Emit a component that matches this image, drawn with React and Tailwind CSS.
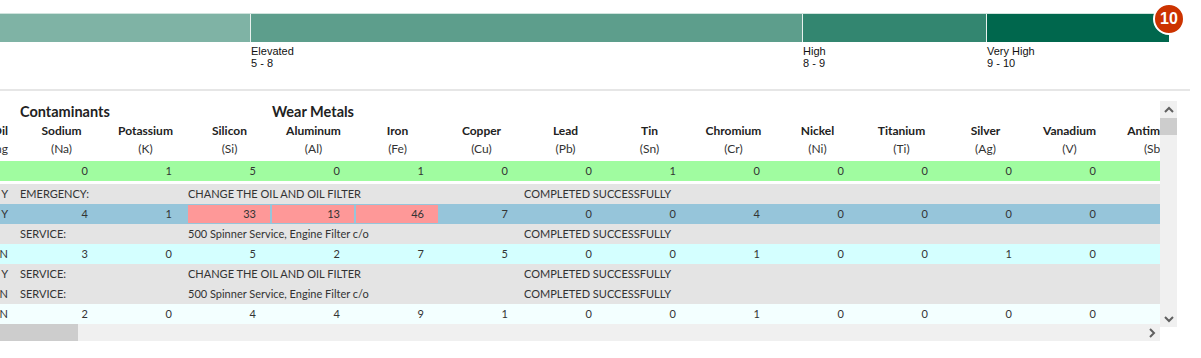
import React from "react";

const columns = [
  ["Sodium", "(Na)"],
  ["Potassium", "(K)"],
  ["Silicon", "(Si)"],
  ["Aluminum", "(Al)"],
  ["Iron", "(Fe)"],
  ["Copper", "(Cu)"],
  ["Lead", "(Pb)"],
  ["Tin", "(Sn)"],
  ["Chromium", "(Cr)"],
  ["Nickel", "(Ni)"],
  ["Titanium", "(Ti)"],
  ["Silver", "(Ag)"],
  ["Vanadium", "(V)"],
  ["Antimony", "(Sb)"],
];

const rows = [
  { kind: "note", bg: "bg-[#e4e4e4]", flag: "Y", label: "EMERGENCY:", action: "CHANGE THE OIL AND OIL FILTER", status: "COMPLETED SUCCESSFULLY" },
  { kind: "data", bg: "bg-[#96c5da]", flag: "Y", values: [4, 1, 33, 13, 46, 7, 0, 0, 4, 0, 0, 0, 0, 0], alert: [2, 3, 4] },
  { kind: "note", bg: "bg-[#e4e4e4]", flag: "", label: "SERVICE:", action: "500 Spinner Service, Engine Filter c/o", status: "COMPLETED SUCCESSFULLY" },
  { kind: "data", bg: "bg-[#d4ffff]", flag: "N", values: [3, 0, 5, 2, 7, 5, 0, 0, 1, 0, 0, 1, 0, 0] },
  { kind: "note", bg: "bg-[#e4e4e4]", flag: "Y", label: "SERVICE:", action: "CHANGE THE OIL AND OIL FILTER", status: "COMPLETED SUCCESSFULLY" },
  { kind: "note", bg: "bg-[#e4e4e4]", flag: "N", label: "SERVICE:", action: "500 Spinner Service, Engine Filter c/o", status: "COMPLETED SUCCESSFULLY" },
  { kind: "data", bg: "bg-[#f3ffff]", flag: "N", values: [2, 0, 4, 4, 9, 1, 0, 0, 1, 0, 0, 0, 0, 0] },
];

const segments = [
  { w: "w-[250px]", bg: "bg-[#7fb3a5]", label: null },
  { w: "w-[552px]", bg: "bg-[#5d9e8c]", label: ["Elevated", "5 - 8"] },
  { w: "w-[184px]", bg: "bg-[#338670]", label: ["High", "8 - 9"] },
  { w: "w-[183px]", bg: "bg-[#00674d]", label: ["Very High", "9 - 10"] },
];

const Chevron = ({ dir }) => {
  const pts = {
    up: "1,6 5,2 9,6",
    down: "1,2 5,6 9,2",
    right: "2,1 6,5 2,9",
  }[dir];
  const size = dir === "right" ? "w-[8px] h-[10px]" : "w-[10px] h-[8px]";
  return (
    <svg className={size} viewBox={dir === "right" ? "0 0 8 10" : "0 0 10 8"}>
      <polyline points={pts} fill="none" stroke="#606060" strokeWidth="2" />
    </svg>
  );
};

// leftmost column is scrolled mostly out of view: only the tail of each text shows
const FlagCell = ({ text }) => (
  <div className="w-[19px] shrink-0 flex justify-end overflow-hidden pr-[11px] whitespace-nowrap">
    {text}
  </div>
);

const DataRow = ({ row }) => (
  <div className={`flex h-[20px] items-center ${row.bg}`}>
    <FlagCell text={row.flag} />
    {row.values.map((v, i) => (
      <div key={i} className="w-[84px] shrink-0 h-full px-[1px] py-[1px]">
        <div
          className={`h-full flex items-center justify-end pr-[14px] ${
            row.alert && row.alert.includes(i) ? "bg-[#fe9898]" : ""
          }`}
        >
          {v}
        </div>
      </div>
    ))}
  </div>
);

const NoteRow = ({ row }) => (
  <div className={`flex h-[20px] items-center whitespace-nowrap ${row.bg}`}>
    <FlagCell text={row.flag} />
    <div className="w-[168px] shrink-0 pl-[1px]">{row.label}</div>
    <div className="w-[336px] shrink-0 pl-[1px]">{row.action}</div>
    <div className="pl-[1px]">{row.status}</div>
  </div>
);

export default function App() {
  return (
    <div className="w-[1201px] h-[358px] bg-white overflow-hidden relative">
      {/* risk gauge */}
      <div className="pt-[13px]">
        <div className="relative w-[1169px]">
          <div className="flex h-[29px] border-t border-[#cfe3dd]">
            {segments.map((s, i) => (
              <div key={i} className={`${s.w} ${s.bg} ${i > 0 ? "border-l border-[#e8f1ee]" : ""}`} />
            ))}
          </div>
          <div className="absolute -right-[16px] -top-[10px] w-[32px] h-[32px] rounded-full bg-[#cc3300] border-2 border-white flex items-center justify-center text-white font-bold text-[16px] font-['Liberation_Sans',Arial,sans-serif]">
            10
          </div>
        </div>
        <div className="flex mt-[3px] font-['Liberation_Sans',Arial,sans-serif] text-[11px] leading-[12px] text-[#111]">
          {segments.map((s, i) => (
            <div key={i} className={`${s.w} ${i > 0 ? "pl-[1px]" : ""}`}>
              {s.label && (
                <>
                  <div>{s.label[0]}</div>
                  <div>{s.label[1]}</div>
                </>
              )}
            </div>
          ))}
        </div>
      </div>

      <div className="mt-[20px] w-[1190px] h-[2px] bg-[#e6e6e6]" />

      {/* results table */}
      <div className="mt-[10px] flex font-['Lato','Open_Sans',sans-serif] text-[#333]">
        <div className="w-[1160px] shrink-0">
          <div className="h-[223px] overflow-hidden text-[11px]">
            <div className="flex h-[20px] items-center font-bold text-[14.5px] text-[#222] pt-[1px] whitespace-nowrap">
              <div className="w-[20px] shrink-0" />
              <div className="w-[252px] shrink-0">Contaminants</div>
              <div>Wear Metals</div>
            </div>
            <div className="flex h-[19px] items-center font-bold text-[12px] text-[#222] whitespace-nowrap">
              <FlagCell text="Oil" />
              {columns.map(([name]) => (
                <div key={name} className="w-[84px] shrink-0 text-center pl-[1px]">
                  {name}
                </div>
              ))}
            </div>
            <div className="flex h-[18px] items-center text-[12px] whitespace-nowrap">
              <FlagCell text="Rating" />
              {columns.map(([name, sym]) => (
                <div key={name} className="w-[84px] shrink-0 text-center pl-[1px]">
                  {sym}
                </div>
              ))}
            </div>
            <div className="mt-[3px]">
              <DataRow row={{ bg: "bg-[#a0fca0]", flag: "", values: [0, 1, 5, 0, 1, 0, 0, 1, 0, 0, 0, 0, 0, 0] }} />
            </div>
            <div className="mt-[3px]">
              {rows.map((r, i) =>
                r.kind === "data" ? <DataRow key={i} row={r} /> : <NoteRow key={i} row={r} />
              )}
            </div>
          </div>
          <div className="h-[17px] bg-[#f0f0f0] flex items-center">
            <div className="w-[78px] h-full bg-[#cdcdcd]" />
            <div className="flex-1" />
            <div className="w-[17px] flex justify-center">
              <Chevron dir="right" />
            </div>
          </div>
        </div>
        <div className="w-[17px] h-[226px] bg-[#f0f0f0] flex flex-col items-center">
          <div className="h-[17px] flex items-center">
            <Chevron dir="up" />
          </div>
          <div className="w-full h-[17px] bg-[#cdcdcd]" />
          <div className="flex-1" />
          <div className="h-[17px] flex items-center">
            <Chevron dir="down" />
          </div>
        </div>
      </div>
    </div>
  );
}
